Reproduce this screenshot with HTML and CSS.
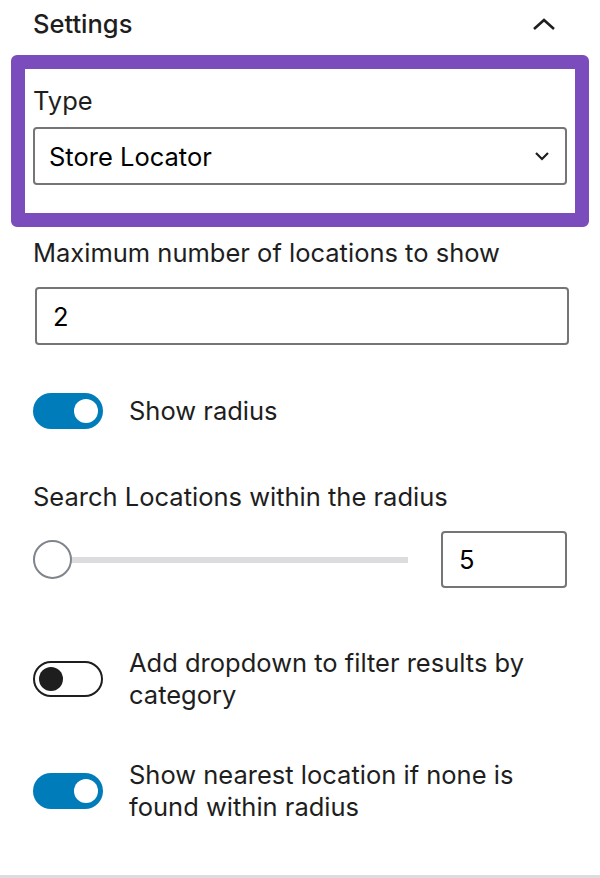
FILE: index.html
```html
<!DOCTYPE html>
<html lang="en">
<head>
    <meta charset="UTF-8">
    <meta name="viewport" content="width=device-width, initial-scale=1.0">
    <title>Settings</title>
    <link rel="stylesheet" href="styles.css">
</head>
<body>
    <!-- Settings Panel -->
    <div class="panel">
        <div class="panel-header">
            <h2>Settings</h2>
            <svg class="chevron-up" width="24" height="14" viewBox="0 0 24 14">
                <path d="M2 12 L12 3 L22 12" fill="none" stroke="#1e1e1e" stroke-width="2.6"/>
            </svg>
        </div>

        <div class="highlight">
            <label class="field-label" for="type">Type</label>
            <div class="select-wrap">
                <select id="type" class="select">
                    <option>Store Locator</option>
                </select>
                <svg class="chevron-down" width="16" height="10" viewBox="0 0 16 10">
                    <path d="M2 2 L8 8 L14 2" fill="none" stroke="#1e1e1e" stroke-width="2.2"/>
                </svg>
            </div>
        </div>

        <div class="field">
            <label class="field-label" for="max">Maximum number of locations to show</label>
            <input type="text" id="max" class="text-input wide" value="2">
        </div>

        <div class="toggle-row first">
            <span class="toggle on"><span class="knob"></span></span>
            <span class="toggle-label">Show radius</span>
        </div>

        <div class="field radius">
            <label class="field-label" for="radius">Search Locations within the radius</label>
            <div class="range-row">
                <input type="range" id="radius" class="range" min="5" max="100" value="5">
                <input type="text" class="text-input small" value="5">
            </div>
        </div>

        <div class="toggle-row second">
            <span class="toggle off"><span class="knob"></span></span>
            <span class="toggle-label">Add dropdown to filter results by category</span>
        </div>

        <div class="toggle-row third">
            <span class="toggle on"><span class="knob"></span></span>
            <span class="toggle-label">Show nearest location if none is found within radius</span>
        </div>
    </div>
</body>
</html>
```
FILE: styles.css
```css
/* Reset */
* {
    margin: 0;
    padding: 0;
    box-sizing: border-box;
}

body {
    font-family: 'Inter', 'Liberation Sans', sans-serif;
    color: #1e1e1e;
    background: #fff;
    width: 600px;
    height: 878px;
    overflow: hidden;
}

/* Panel */
.panel {
    height: 878px;
    border-bottom: 3px solid #dcdcde;
}

.panel-header {
    height: 48px;
    padding: 0 44px 0 33px;
    display: flex;
    align-items: center;
    justify-content: space-between;
}

.panel-header h2 {
    font-size: 25.5px;
    font-weight: 500;
    line-height: 32px;
}

.chevron-up {
    display: block;
}

/* Highlighted block */
.highlight {
    margin: 7px 11px 0 11px;
    border: 14px solid #7b4cbc;
    border-radius: 6px;
    padding: 16px 8px 28px 8px;
}

.field-label {
    display: block;
    font-size: 25.5px;
    line-height: 32px;
    margin-bottom: 10px;
}

.select-wrap {
    position: relative;
}

.select {
    appearance: none;
    -webkit-appearance: none;
    width: 100%;
    height: 58px;
    padding: 0 50px 0 14px;
    border: 2px solid #757575;
    border-radius: 4px;
    background: #fff;
    font-family: inherit;
    font-size: 25.5px;
    color: #000;
}

.chevron-down {
    position: absolute;
    right: 17px;
    top: 24px;
}

/* Fields */
.field {
    padding: 10px 33px 0 33px;
}

.field .field-label {
    margin-bottom: 18px;
}

.text-input {
    height: 58px;
    border: 2px solid #757575;
    border-radius: 4px;
    font-family: inherit;
    font-size: 25.5px;
    color: #000;
    padding: 0 16px;
    background: #fff;
}

.text-input.wide {
    width: 534px;
    margin-left: 2px;
}

.text-input.small {
    width: 126px;
    height: 57px;
}

.radius {
    padding-top: 52px;
}

.range-row {
    display: flex;
    align-items: center;
    gap: 33px;
}

.range {
    -webkit-appearance: none;
    appearance: none;
    width: 375px;
    height: 6px;
    background: #dcdcde;
    outline: none;
}

.range::-webkit-slider-thumb {
    -webkit-appearance: none;
    width: 39px;
    height: 39px;
    border-radius: 50%;
    border: 2px solid #80858b;
    background: #fff;
}

/* Toggles */
.toggle-row {
    display: flex;
    align-items: center;
    gap: 26px;
    padding: 0 33px;
}

.toggle-row.first {
    margin-top: 48px;
}

.toggle-row.second {
    margin-top: 59px;
}

.toggle-row.third {
    margin-top: 48px;
}

.toggle {
    flex: 0 0 70px;
    width: 70px;
    height: 36px;
    border-radius: 18px;
    display: flex;
    align-items: center;
}

.toggle .knob {
    width: 24px;
    height: 24px;
    border-radius: 50%;
}

.toggle.on {
    background: #007cba;
    justify-content: flex-end;
    padding-right: 5px;
}

.toggle.on .knob {
    background: #fff;
}

.toggle.off {
    border: 2px solid #1e1e1e;
    background: #fff;
    padding-left: 4px;
}

.toggle.off .knob {
    background: #1e1e1e;
}

.toggle-label {
    font-size: 25.5px;
    line-height: 32px;
    max-width: 410px;
}
```
